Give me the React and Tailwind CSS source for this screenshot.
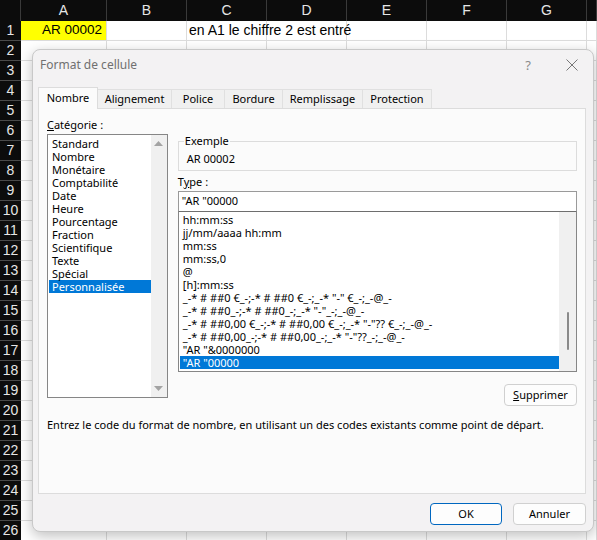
import React from 'react';

const COLS = ['A', 'B', 'C', 'D', 'E', 'F', 'G', ''];
const ROWS = Array.from({ length: 26 }, (_, i) => i + 1);

const CATEGORIES = [
  'Standard', 'Nombre', 'Monétaire', 'Comptabilité', 'Date', 'Heure',
  'Pourcentage', 'Fraction', 'Scientifique', 'Texte', 'Spécial', 'Personnalisée',
];

const TYPES = [
  'hh:mm:ss',
  'jj/mm/aaaa hh:mm',
  'mm:ss',
  'mm:ss,0',
  '@',
  '[h]:mm:ss',
  '_-* # ##0 €_-;-* # ##0 €_-;_-* "-" €_-;_-@_-',
  '_-* # ##0_-;-* # ##0_-;_-* "-"_-;_-@_-',
  '_-* # ##0,00 €_-;-* # ##0,00 €_-;_-* "-"?? €_-;_-@_-',
  '_-* # ##0,00_-;-* # ##0,00_-;_-* "-"??_-;_-@_-',
  '"AR "&0000000',
  '"AR "00000',
];

const TABS = [
  { label: 'Nombre', w: 'w-[60px]' },
  { label: 'Alignement', w: 'w-[75px]' },
  { label: 'Police', w: 'w-[54px]' },
  { label: 'Bordure', w: 'w-[59px]' },
  { label: 'Remplissage', w: 'w-[81px]' },
  { label: 'Protection', w: 'w-[70px]' },
];

function Sheet() {
  return (
    <div className="grid grid-cols-[21px_86px_80px_80px_80px_80px_80px_80px_1fr] font-['Liberation_Sans',sans-serif] text-[13.5px] text-black">
      {/* Column headers */}
      <div className="h-[21px] bg-[#0c0c0c] border-r border-[#3a3a3a]" />
      {COLS.map((c, i) => (
        <div key={i} className="h-[21px] bg-[#0c0c0c] border-r border-[#3a3a3a] flex items-center justify-center text-[#e6e6e6] text-[14px]">
          {c}
        </div>
      ))}
      {/* Rows */}
      {ROWS.map(r => (
        <React.Fragment key={r}>
          <div className="h-5 bg-[#0c0c0c] border-b border-[#4a4a4a] flex items-center justify-center text-[#e6e6e6] text-[14px]">
            {r}
          </div>
          {COLS.map((c, i) => (
            <div
              key={i}
              className={`h-5 border-r border-b border-[#dcdcdc] flex items-center whitespace-nowrap overflow-visible ${
                r === 1 && i === 0 ? 'bg-[#ffff00] justify-end pr-[4px]' : 'bg-white'
              }`}
            >
              {r === 1 && i === 0 && 'AR 00002'}
              {r === 1 && i === 2 && <span className="pl-[2px] text-[14px] relative z-0">en A1 le chiffre 2 est entré</span>}
            </div>
          ))}
        </React.Fragment>
      ))}
    </div>
  );
}

function ArrowUp() {
  return (
    <svg width="9" height="5" viewBox="0 0 9 5"><path d="M0 5 L4.5 0 L9 5 Z" fill="#a3a3a3" /></svg>
  );
}

function ArrowDown() {
  return (
    <svg width="9" height="5" viewBox="0 0 9 5"><path d="M0 0 L9 0 L4.5 5 Z" fill="#a3a3a3" /></svg>
  );
}

function Dialog() {
  return (
    <div className="absolute left-[32px] top-[49px] w-[562px] h-[483px] rounded-lg bg-[#f3f2f3] border border-[#c8c8c8] shadow-[0_4px_14px_rgba(0,0,0,0.25)] flex flex-col font-['Noto_Sans',sans-serif] text-[11px] text-black">
      {/* Title bar */}
      <div className="h-[37px] flex items-start pt-[7px] pl-[7px] pr-[12px]">
        <span className="text-[#707070] text-[12px] leading-4 flex-1">Format de cellule</span>
        <span className="text-[#8a8a8a] text-[13px] leading-4 mr-[35px]">?</span>
        <svg width="12" height="12" viewBox="0 0 12 12" className="mr-[3px] mt-[2px]">
          <path d="M0.5 0.5 L11.5 11.5 M11.5 0.5 L0.5 11.5" stroke="#777" strokeWidth="1" />
        </svg>
      </div>

      {/* Tabs */}
      <div className="flex items-end pl-[5px] h-[21px]">
        {TABS.map((t, i) => (
          <div
            key={t.label}
            className={`${t.w} flex items-center justify-center border-t border-l border-r ${
              i === 0
                ? 'h-[22px] bg-[#fbfbfb] border-[#dcdcdc] relative z-10 -mb-px'
                : 'h-[19px] bg-[#f0f0f0] border-[#e0e0e0] -ml-px'
            }`}
          >
            {t.label}
          </div>
        ))}
      </div>

      {/* Panel */}
      <div className="ml-[5px] mr-[7px] h-[386px] bg-[#fbfbfb] border border-[#dcdcdc] pl-[8px] pr-[8px] pt-[8px]">
        <div className="flex items-start gap-[10px]">
          {/* Category column */}
          <div className="flex flex-col w-[121px]">
            <div className="leading-4 h-4 mb-px"><span className="underline">C</span>atégorie :</div>
            <div className="h-[264px] border border-[#868686] bg-white flex">
              <div className="flex-1 pt-[2px] pl-[1px]">
                {CATEGORIES.map(c => (
                  <div
                    key={c}
                    className={`h-[13px] leading-[13px] pl-[3px] ${
                      c === 'Personnalisée' ? 'bg-[#0078d7] text-white' : ''
                    }`}
                  >
                    {c}
                  </div>
                ))}
              </div>
              <div className="w-[16px] bg-[#f0f0f0] flex flex-col items-center justify-between py-[6px]">
                <ArrowUp />
                <ArrowDown />
              </div>
            </div>
          </div>

          {/* Type column */}
          <div className="flex flex-col w-[400px] mt-[16px]">
            <fieldset className="border border-[#dcdcdc] px-[8px] pb-[3px] m-0">
              <legend className="leading-4 px-[1px] -ml-[3px]">Exemple</legend>
              <div className="leading-4 pt-[2px]">AR 00002</div>
            </fieldset>
            <div className="leading-4 mt-[3px]">T<span className="underline">y</span>pe :</div>
            <div className="h-[21px] mt-[1px] border border-[#9a9a9a] border-b-[#6e6e6e] bg-white flex items-center pl-[3px] text-[11px]">
              "AR "00000
            </div>
            <div className="h-[160px] border border-[#868686] border-t-0 bg-white flex text-[11px]">
              <div className="flex-1 pt-[1px] pl-[1px]">
                {TYPES.map((t, i) => (
                  <div
                    key={i}
                    className={`h-[13px] leading-[13px] pl-[3px] whitespace-pre ${
                      i === TYPES.length - 1 ? 'bg-[#0078d7] text-white' : ''
                    }`}
                  >
                    {t}
                  </div>
                ))}
              </div>
              <div className="w-[17px] bg-[#f0f0f0] flex flex-col items-center pt-[100px]">
                <div className="w-[2px] h-[38px] bg-[#8a8a8a] rounded-full" />
              </div>
            </div>
            <div className="flex justify-end mt-[12px]">
              <button className="w-[73px] h-[22px] rounded-[4px] border border-[#d0d0d0] bg-[#fdfdfd] text-black">
                <span className="underline">S</span>upprimer
              </button>
            </div>
          </div>
        </div>
        <div className="leading-4 mt-[11px]">
          Entrez le code du format de nombre, en utilisant un des codes existants comme point de départ.
        </div>
      </div>

      {/* Footer buttons */}
      <div className="flex justify-end gap-[11px] mt-[9px] pr-[7px]">
        <button className="w-[72px] h-[22px] rounded-[4px] border border-[#0067c0] bg-[#fdfdfd]">OK</button>
        <button className="w-[73px] h-[22px] rounded-[4px] border border-[#d0d0d0] bg-[#fdfdfd]">Annuler</button>
      </div>
    </div>
  );
}

export default function App() {
  return (
    <div className="relative w-[597px] h-[540px] overflow-hidden bg-white">
      <Sheet />
      <Dialog />
    </div>
  );
}
